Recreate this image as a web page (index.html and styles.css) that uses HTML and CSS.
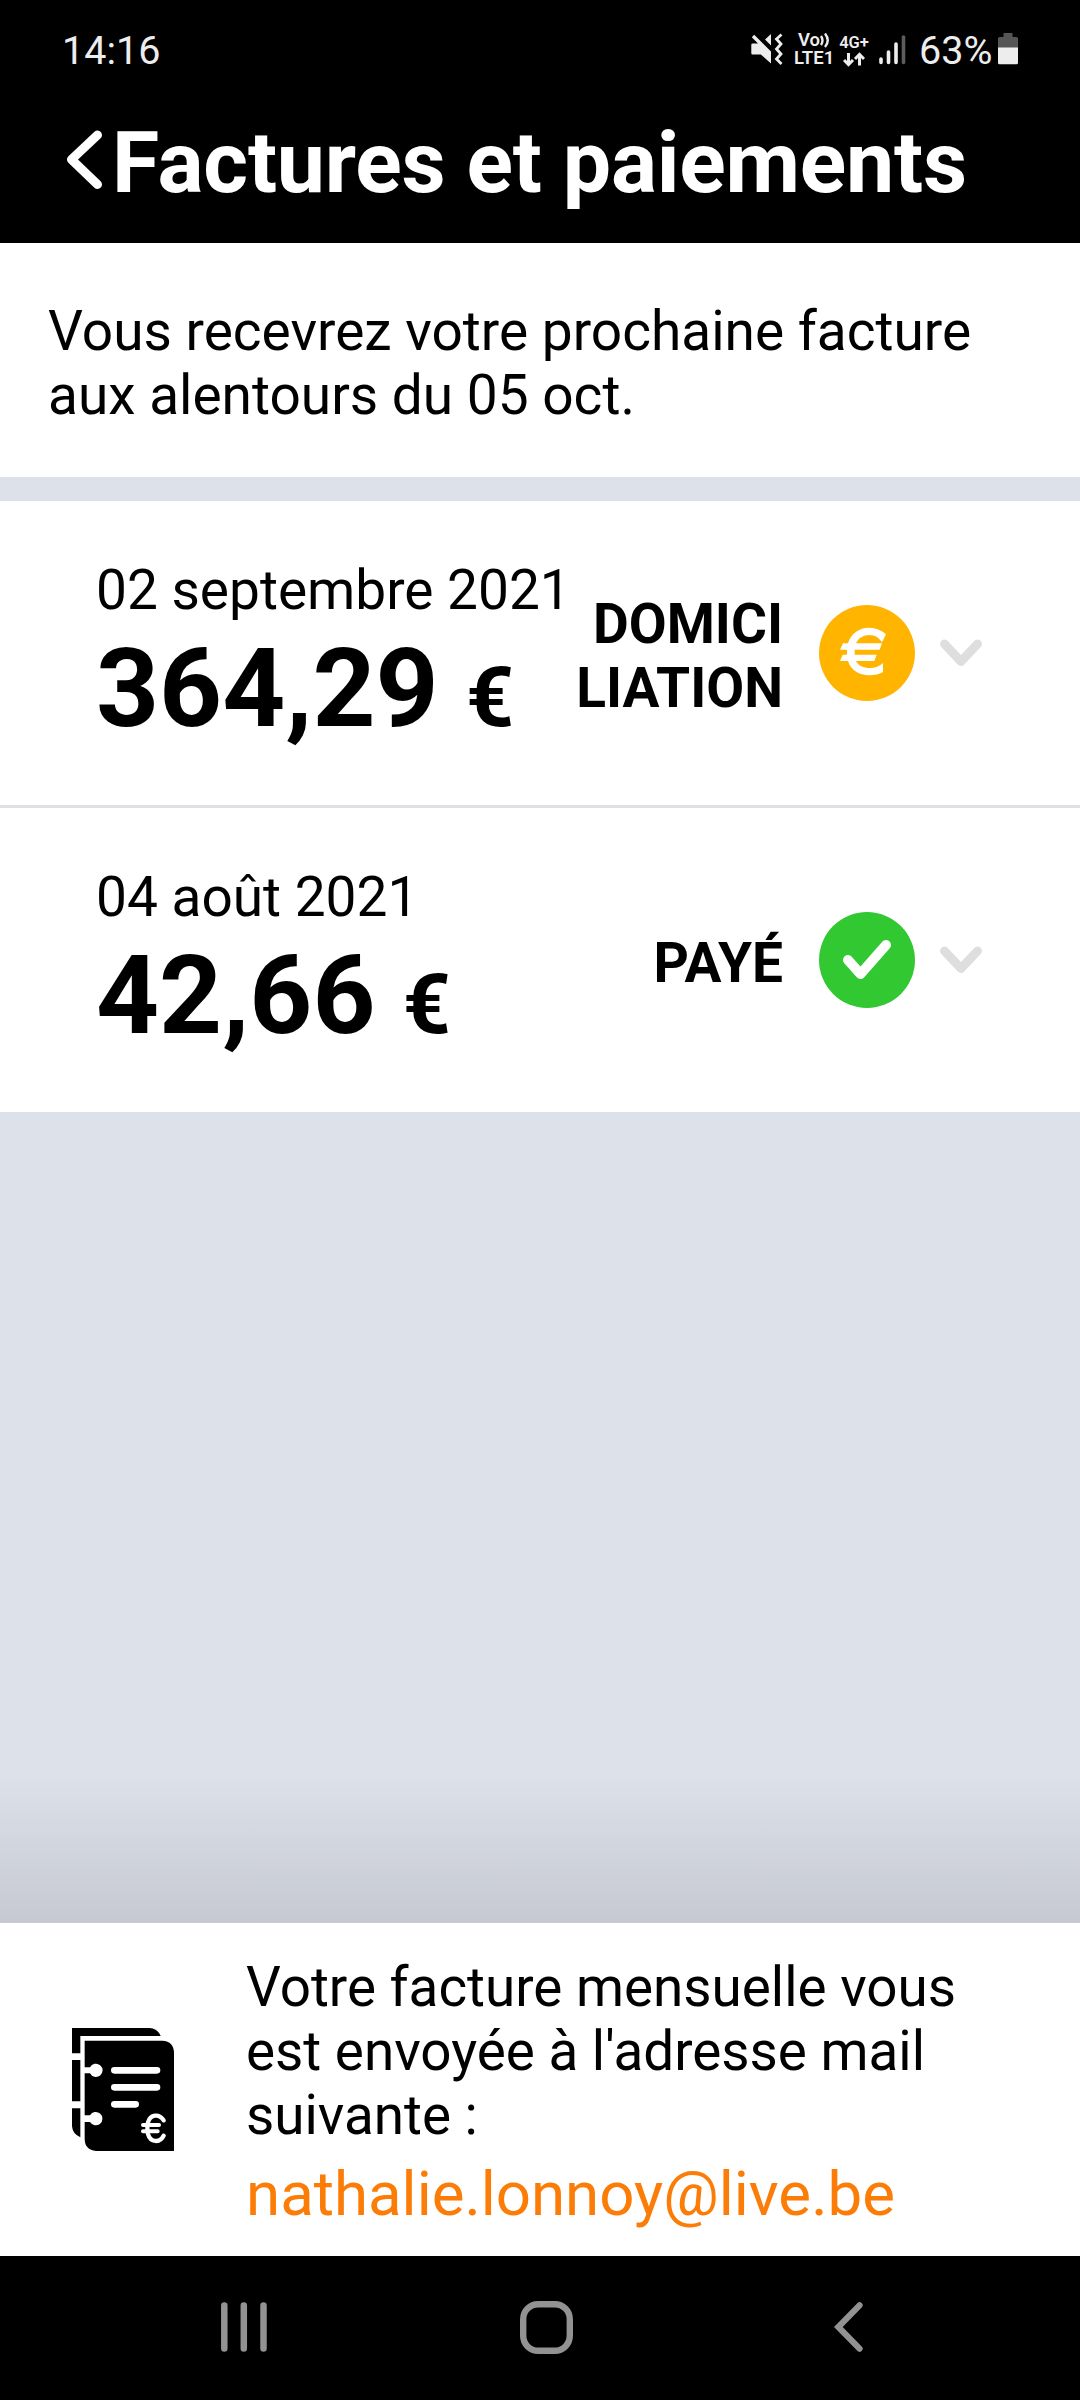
FILE: index.html
```
<!DOCTYPE html>
<html lang="fr">
<head>
<meta charset="utf-8">
<title>Factures et paiements</title>
<link rel="stylesheet" href="styles.css">
</head>
<body>
<div class="screen">
  <header class="header">
    <div class="status-bar">
      <span class="clock">14:16</span>
      <div class="status-icons">
        <svg class="mute" width="32" height="32" viewBox="0 0 32 32">
          <path fill="#ededed" d="M1.5 10.5H7L0.8 4.2L3.2 1.8L20 18.6V30.5L9.8 21.5H1.5Q0.3 21.5 0.3 20.3V11.7Q0.3 10.5 1.5 10.5ZM14 6.5L20 1V12.5Z"/>
          <path fill="none" stroke="#ededed" stroke-width="2.8" d="M30.5 1.5L25.5 6L30 11L25.5 16L30 21L25.5 26L30.5 31"/>
        </svg>
        <div class="volte">
          <span class="volte-top">Vo<svg width="10" height="16" viewBox="0 0 10 16"><path fill="none" stroke="#ededed" stroke-width="2.4" d="M1 4Q4 8.500 1 13M5 1.500Q10.500 8.500 5 15"/></svg></span>
          <span class="volte-bottom">LTE1</span>
        </div>
        <div class="network">
          <span class="network-name">4G+</span>
          <svg width="22" height="15" viewBox="0 0 22 15"><path fill="none" stroke="#ededed" stroke-width="3" d="M5.500 1V12.500M1 8L5.500 12.700L10 8M16.500 13.500V2.500M12 7L16.500 2.300L21 7"/></svg>
        </div>
        <svg class="signal" width="27" height="30" viewBox="0 0 27 30">
          <g stroke-width="3.600" stroke-linecap="round" stroke="#ededed"><path d="M2 24V27.500M9.500 17V27.500M17 9V27.500"/><path stroke="#5c5c5c" d="M24.500 2V27.500"/></g>
        </svg>
        <span class="percent">63%</span>
        <svg class="battery" width="20" height="32" viewBox="0 0 20 32">
          <path fill="#555" d="M5.500 0H14.500V4H18.500Q20 4 20 5.500V15H0V5.500Q0 4 1.500 4H5.500Z"/>
          <path fill="#ededed" d="M0 14.500H20V29.700Q20 31.200 18.500 31.200H1.500Q0 31.200 0 29.700Z"/>
        </svg>
      </div>
    </div>
    <div class="title-bar">
      <svg class="back" width="37" height="60" viewBox="0 0 37 60"><path fill="none" stroke="#fff" stroke-width="9" stroke-linecap="round" stroke-linejoin="round" d="M31.500 5L5.500 29.500L31.500 54.500"/></svg>
      <h1 class="title">Factures et paiements</h1>
    </div>
  </header>

  <p class="notice">Vous recevrez votre prochaine facture<br>aux alentours du 05 oct.</p>

  <main class="bills">
    <section class="bill">
      <div class="bill-info">
        <div class="bill-date">02 septembre 2021</div>
        <div class="bill-amount">364,29 <span class="currency">€</span></div>
      </div>
      <div class="bill-status">DOMICI<br>LIATION</div>
      <svg class="badge" width="96" height="96" viewBox="27 14 288 288">
        <circle cx="171" cy="158" r="144" fill="#ffb400"/>
        <path fill="#fff" d="M228 102Q206 82 178 82C147 82 122 100 114 129H99L90 148H111V163H98L90 182H114C122 209 147 225 178 225Q202 225 219 215V188Q203 203 180 203C160 203 145 196 138 182H193L200 163H134V148H209L216 129H138C145 113 160 104 179 104Q202 104 216 126Z"/>
      </svg>
      <svg class="chevron" width="42" height="28" viewBox="0 0 42 28"><path fill="none" stroke="#dedede" stroke-width="9" stroke-linecap="round" stroke-linejoin="round" d="M4.500 5L21 22.500L37.500 5"/></svg>
    </section>
    <section class="bill">
      <div class="bill-info">
        <div class="bill-date">04 août 2021</div>
        <div class="bill-amount">42,66 <span class="currency">€</span></div>
      </div>
      <div class="bill-status">PAYÉ</div>
      <svg class="badge" width="96" height="96" viewBox="0 0 96 96">
        <circle cx="48" cy="48" r="48" fill="#32c832"/>
        <path fill="none" stroke="#fff" stroke-width="10" stroke-linecap="round" stroke-linejoin="round" d="M29 48L41.500 62L67 33"/>
      </svg>
      <svg class="chevron" width="42" height="28" viewBox="0 0 42 28"><path fill="none" stroke="#dedede" stroke-width="9" stroke-linecap="round" stroke-linejoin="round" d="M4.500 5L21 22.500L37.500 5"/></svg>
    </section>
  </main>

  <div class="footer-shadow"></div>
  <footer class="delivery">
    <svg class="book" width="102" height="123" viewBox="96 84 306 369">
      <path d="M96 84H329Q353 86 362 108H121V160H96ZM96 180H121V304H96ZM96 325H121V412Q98 402 96 379Z"/>
      <path d="M134 122H367Q402 124 402 160V453H168Q134 449 134 416V366H150A20 20 0 1 0 150 346H134V220H150A20 20 0 1 0 150 202H134Z"/>
      <g fill="none" stroke="#fff" stroke-linecap="round">
        <path stroke-width="20" d="M223 211H351M223 262H351M223 313H287"/>
        <path stroke-width="13" d="M371 361C357 340 331 343 324 367Q320 385 324 402C331 428 360 430 371 407"/>
        <path stroke-width="12" d="M309 375H357M309 394H353"/>
      </g>
    </svg>
    <div class="delivery-text">
      <p class="delivery-label">Votre facture mensuelle vous<br>est envoyée à l'adresse mail<br>suivante :</p>
      <a class="email">nathalie.lonnoy@live.be</a>
    </div>
  </footer>

  <nav class="nav-bar">
    <svg class="recents" width="46" height="50" viewBox="0 0 46 50"><path stroke="#929292" stroke-width="6.500" stroke-linecap="round" d="M3.300 3.500V46.500M22.800 3.500V46.500M42.500 3.500V46.500"/></svg>
    <svg class="home" width="53" height="53" viewBox="0 0 53 53"><rect x="3.200" y="3.200" width="46.600" height="46.600" rx="15" fill="none" stroke="#929292" stroke-width="6.400"/></svg>
    <svg class="nav-back" width="29" height="50" viewBox="0 0 29 50"><path fill="none" stroke="#929292" stroke-width="6.200" stroke-linecap="round" d="M25.500 3.300L4.300 25L25.500 46.700"/></svg>
  </nav>
</div>
</body>
</html>
```
FILE: styles.css
```
* { box-sizing: border-box; }

body {
  margin: 0;
  background: #dde1ea;
  color: #000;
  font-family: "Roboto", sans-serif;
}

p, h1 { margin: 0; }
svg { display: block; flex: none; }

.screen {
  width: 1080px;
  height: 2400px;
  display: flex;
  flex-direction: column;
}

/* header */
.header {
  height: 243px;
  background: #000;
  color: #fff;
}

.status-bar {
  height: 112px;
  padding: 28px 62px 0 62px;
  display: flex;
  justify-content: space-between;
  color: #ededed;
}

.clock,
.percent {
  font-size: 39.5px;
  line-height: 46px;
}

.status-icons {
  display: flex;
  align-items: flex-start;
}

.mute { margin-top: 5px; }

.volte {
  width: 38px;
  margin: 4px 0 0 11px;
  font-weight: 600;
}

.volte-top {
  display: flex;
  padding-left: 4px;
  font-size: 18.5px;
  line-height: 17px;
}

.volte-bottom {
  display: block;
  font-size: 18.5px;
  line-height: 18px;
}

.network {
  width: 30px;
  margin: 6px 0 0 7px;
  display: flex;
  flex-direction: column;
  align-items: center;
  font-weight: 600;
}

.network-name {
  font-size: 16.5px;
  line-height: 18px;
}

.signal { margin: 7px 13px 0 10px; }
.percent { width: 72px; }
.battery { margin: 5px 0 0 7px; }

.title-bar {
  display: flex;
  padding-left: 66px;
}

.back { margin-top: 18px; }

.title {
  margin-left: 9px;
  font-size: 86px;
  font-weight: 700;
  line-height: 101px;
  letter-spacing: -0.22px;
  white-space: nowrap;
}

/* next bill notice */
.notice {
  height: 234px;
  padding: 56px 48px 0;
  background: #fff;
  font-size: 55px;
  line-height: 64px;
}

/* bill list */
.bills {
  margin-top: 24px;
  background: #dde1e5;
}

.bill {
  height: 304px;
  padding: 0 98px 0 96px;
  display: flex;
  align-items: center;
  background: #fff;
}

.bill + .bill { margin-top: 3px; }

.bill-info {
  flex: 1;
  min-width: 0;
  align-self: flex-start;
  padding-top: 57px;
  white-space: nowrap;
}

.bill-date {
  font-size: 55px;
  line-height: 64px;
}

.bill-amount {
  margin-top: 5px;
  font-size: 110px;
  font-weight: 700;
  line-height: 124px;
}

.currency {
  font-size: 84px;
  line-height: 1;
}

.bill-status {
  padding-top: 6px;
  margin-right: 36px;
  font-size: 55px;
  font-weight: 700;
  line-height: 64px;
  text-align: right;
}

.chevron { margin-left: 25px; }

/* delivery footer */
.footer-shadow {
  height: 150px;
  margin-top: auto;
  background: linear-gradient(#dde1ea, #c6c9d1);
}

.delivery {
  height: 333px;
  padding: 32px 72px 0;
  display: flex;
  background: #fff;
}

.book { margin-top: 73px; }
.delivery-text { margin-left: 72px; }

.delivery-label {
  font-size: 54.8px;
  line-height: 64px;
}

.email {
  display: block;
  margin-top: 11px;
  color: #fb7d07;
  font-size: 61.8px;
  line-height: 72px;
}

/* system navigation */
.nav-bar {
  height: 144px;
  padding: 0 0 2px 221px;
  display: flex;
  align-items: center;
  background: #000;
}

.home { margin-left: 253px; }
.nav-back { margin-left: 261px; }
```
